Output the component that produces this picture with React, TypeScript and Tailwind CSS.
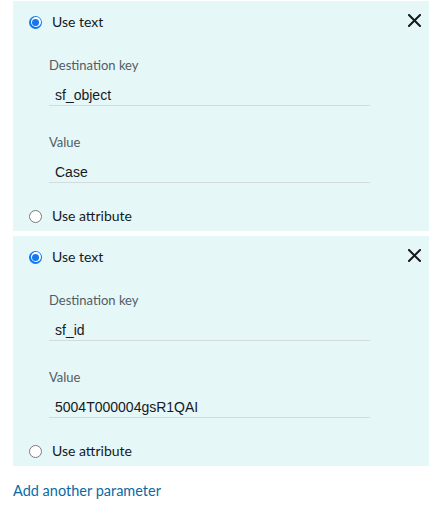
import { useState } from 'react'

type Param = { id: number; keyName: string; value: string }

const initialParams: Param[] = [
  { id: 1, keyName: 'sf_object', value: 'Case' },
  { id: 2, keyName: 'sf_id', value: '5004T000004gsR1QAI' }
]

function Radio({ checked }: { checked: boolean }) {
  if (checked) {
    return (
      <span className="flex h-[13px] w-[13px] items-center justify-center rounded-full bg-[#1476f2]">
        <span className="flex h-[10px] w-[10px] items-center justify-center rounded-full bg-white">
          <span className="h-[7px] w-[7px] rounded-full bg-[#1476f2]" />
        </span>
      </span>
    )
  }
  return <span className="h-[13px] w-[13px] rounded-full border border-[#7b7b7b] bg-white" />
}

function CloseIcon() {
  return (
    <svg width="13" height="13" viewBox="0 0 13 13" className="mt-[2px] self-start">
      <path d="M1 1 L12 12 M12 1 L1 12" stroke="#16191f" strokeWidth="2" strokeLinecap="square" />
    </svg>
  )
}

function Field({ label, value }: { label: string; value: string }) {
  return (
    <div>
      <div className="h-5 text-[13px] leading-5 text-[#545b64]">{label}</div>
      <div className="mt-[10px] h-[21px] w-[321px] border-b border-[#d5dbdb] pl-[6px] font-['Liberation_Sans',Arial,sans-serif] text-[14px] leading-5 text-[#16191f]">
        {value}
      </div>
    </div>
  )
}

function ParamPanel({ param }: { param: Param }) {
  return (
    <div className="bg-[#e5f7f7] pb-[5px] pt-[11px]">
      <div className="flex h-5 items-center justify-between pl-[16px] pr-[8px]">
        <label className="flex items-center gap-[10px] text-[14px] leading-5 text-[#16191f]">
          <Radio checked />
          Use text
        </label>
        <CloseIcon />
      </div>
      <div className="mt-[23px] pl-[36px]">
        <Field label="Destination key" value={param.keyName} />
        <div className="mt-[26px]">
          <Field label="Value" value={param.value} />
        </div>
      </div>
      <div className="mt-[23px] flex h-5 items-center pl-[16px]">
        <label className="flex items-center gap-[10px] text-[14px] leading-5 text-[#16191f]">
          <Radio checked={false} />
          Use attribute
        </label>
      </div>
    </div>
  )
}

export default function App() {
  const [params] = useState(initialParams)

  return (
    <div className="min-h-[532px] bg-white pl-[13px] pt-px font-['Lato','Noto_Sans',sans-serif]">
      <div className="flex w-[416px] flex-col gap-[5px]">
        {params.map(param => (
          <ParamPanel key={param.id} param={param} />
        ))}
      </div>
      <div className="mt-[15px] h-5 text-[14.5px] leading-5 text-[#0a6aa6]">Add another parameter</div>
    </div>
  )
}
